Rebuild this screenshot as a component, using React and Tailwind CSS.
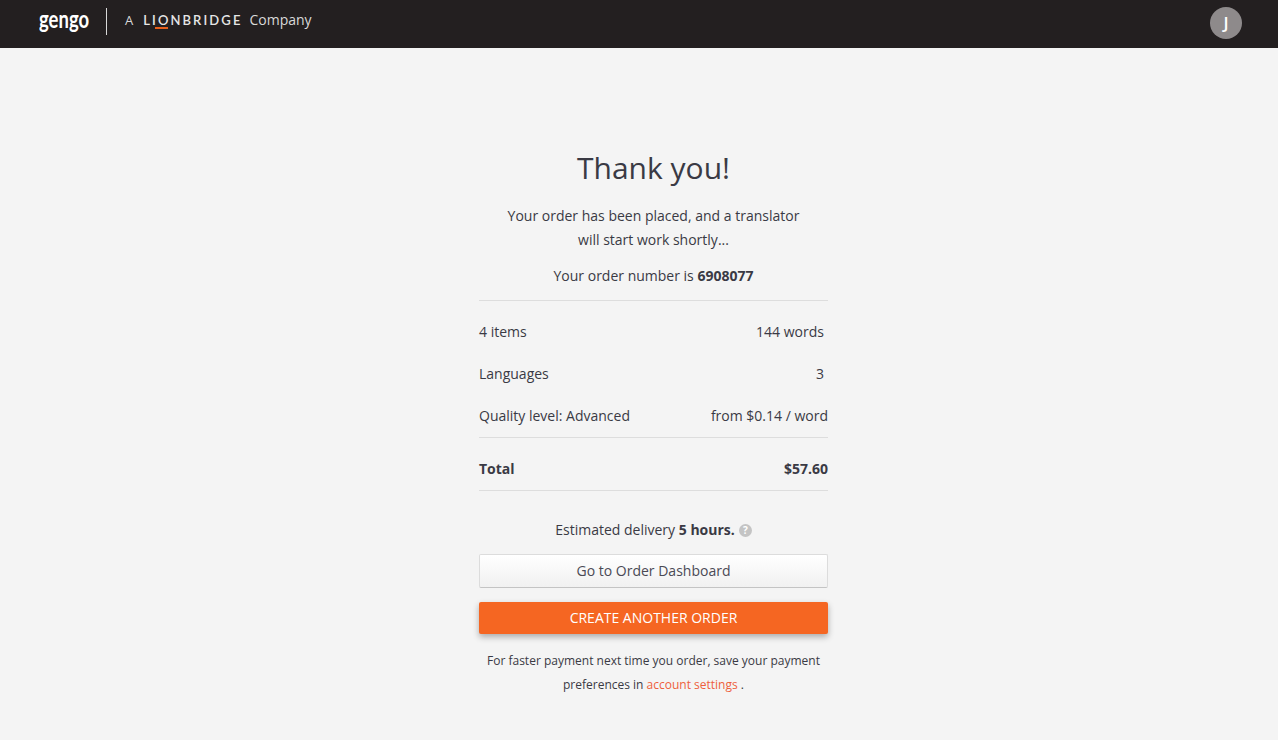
import React from "react";

const rows = [
  { label: "4 items", value: "144 words", inset: true },
  { label: "Languages", value: "3", inset: true },
  { label: "Quality level: Advanced", value: "from $0.14 / word" },
];

const Header = () => (
  <header className="h-12 bg-[#231f20] flex items-start justify-between pl-[39px] pr-9">
    <div className="flex items-center h-[40px] text-white">
      <span className="font-['Lato',sans-serif] font-bold text-[24px] leading-none w-[51px] -mt-[3px] scale-x-[0.77] origin-left">gengo</span>
      <span className="w-px h-[27px] bg-[#d8d8d8] ml-[16px] mt-[3px]"></span>
      <span className="ml-[18px] text-[13px] text-[#d9d9d9]">A</span>
      <span className="relative ml-[10px] text-[13px] font-semibold tracking-[2.1px] text-[#e6e6e6] font-['Lato',sans-serif]">
        LIONBRIDGE
        <span className="absolute left-[12px] top-[16px] w-[13px] h-[2px] bg-[#e8601c]"></span>
      </span>
      <span className="ml-[7px] text-[14px] text-[#d9d9d9]">Company</span>
    </div>
    <div className="mt-[7px] w-8 h-8 rounded-full bg-[#8e8a8b] flex items-center justify-center text-white text-[17px] font-semibold">J</div>
  </header>
);

const App = () => {
  return (
    <div className="min-h-[740px] bg-[#f4f4f4] text-[#3a3a44] text-sm font-['Open_Sans',sans-serif]">
      <Header />
      <main className="w-[349px] ml-[479px] pt-[97px] pb-[43px]">
        <h1 className="text-[30px] leading-[46px] text-center">Thank you!</h1>
        <p className="mt-[13px] text-center leading-6">
          Your order has been placed, and a translator
          <br />
          will start work shortly...
        </p>
        <p className="mt-3 text-center leading-6">
          Your order number is <b>6908077</b>
        </p>
        <div className="mt-3 border-t border-[#dddddd] pt-[10px]">
          {rows.map((r) => (
            <div key={r.label} className="h-[42px] flex items-center justify-between">
              <span>{r.label}</span>
              <span className={r.inset ? "pr-1" : ""}>{r.value}</span>
            </div>
          ))}
        </div>
        <div className="h-[54px] pt-[10px] border-y border-[#dddddd] flex items-center justify-between font-bold">
          <span>Total</span>
          <span>$57.60</span>
        </div>
        <div className="mt-[27px] flex items-center justify-center gap-1 leading-6">
          <span>
            Estimated delivery <b>5 hours.</b>
          </span>
          <span className="w-[13px] h-[13px] rounded-full bg-[#c4c4c4] text-white text-[10px] leading-none font-bold flex items-center justify-center">?</span>
        </div>
        <button className="mt-3 w-full h-[34px] rounded-[2px] border border-[#dcdcdc] border-b-[#c4c4c4] bg-gradient-to-b from-white to-[#f1f1f1] text-center text-[#4a4a55]">
          Go to Order Dashboard
        </button>
        <button className="mt-[14px] w-full h-8 rounded-[2px] bg-[#f56622] text-white text-center shadow-[0_3px_6px_rgba(0,0,0,0.3)]">
          CREATE ANOTHER ORDER
        </button>
        <p className="mt-[15px] text-xs leading-6 text-center">
          For faster payment next time you order, save your payment
          <br />
          preferences in <span className="text-[#ee5f3c]">account settings</span> .
        </p>
      </main>
    </div>
  );
};

export default App;
